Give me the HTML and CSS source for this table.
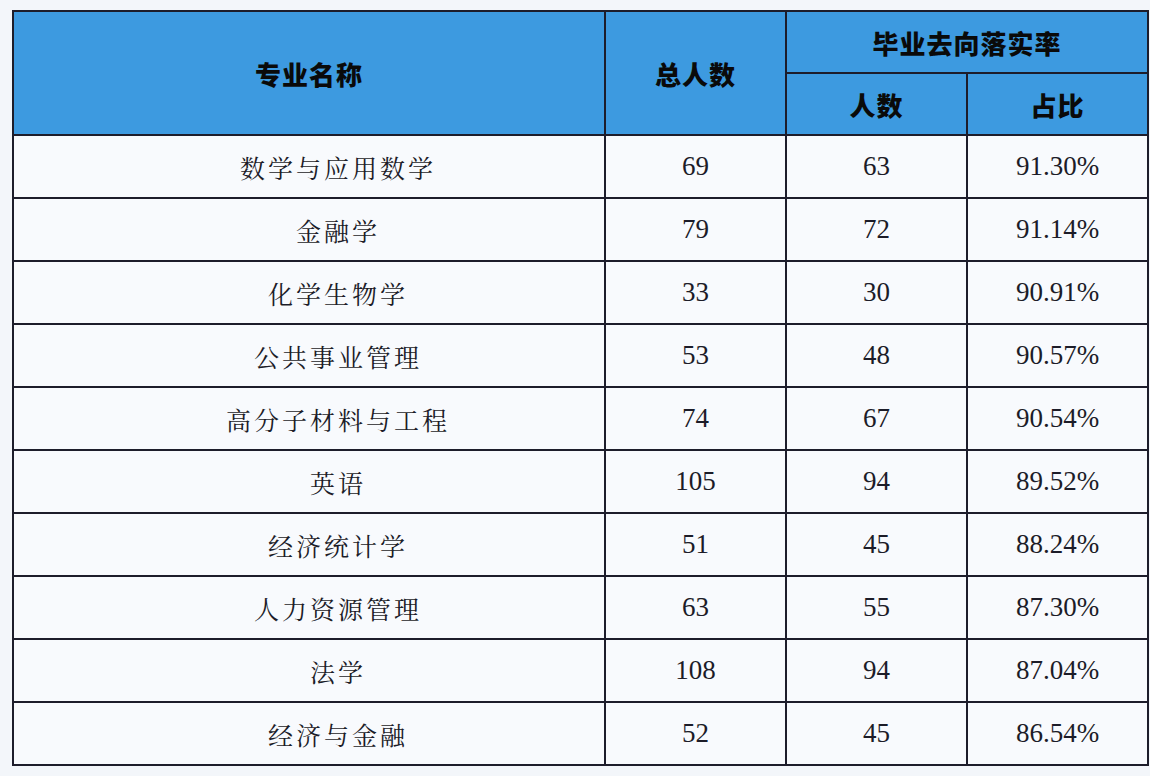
FILE: index.html
```html
<!DOCTYPE html>
<html lang="zh">
<head>
<meta charset="utf-8">
<link rel="stylesheet" href="styles.css">
</head>
<body>
<div class="wrap">
<table class="grid">
  <colgroup>
    <col class="c-name"><col class="c-num"><col class="c-num"><col class="c-num">
  </colgroup>
  <thead>
    <tr class="h1">
      <th rowspan="2">专业名称</th>
      <th rowspan="2">总人数</th>
      <th colspan="2">毕业去向落实率</th>
    </tr>
    <tr class="h2">
      <th>人数</th>
      <th>占比</th>
    </tr>
  </thead>
  <tbody>
    <tr><td class="zh">数学与应用数学</td><td>69</td><td>63</td><td>91.30%</td></tr>
    <tr><td class="zh">金融学</td><td>79</td><td>72</td><td>91.14%</td></tr>
    <tr><td class="zh">化学生物学</td><td>33</td><td>30</td><td>90.91%</td></tr>
    <tr><td class="zh">公共事业管理</td><td>53</td><td>48</td><td>90.57%</td></tr>
    <tr><td class="zh">高分子材料与工程</td><td>74</td><td>67</td><td>90.54%</td></tr>
    <tr><td class="zh">英语</td><td>105</td><td>94</td><td>89.52%</td></tr>
    <tr><td class="zh">经济统计学</td><td>51</td><td>45</td><td>88.24%</td></tr>
    <tr><td class="zh">人力资源管理</td><td>63</td><td>55</td><td>87.30%</td></tr>
    <tr><td class="zh">法学</td><td>108</td><td>94</td><td>87.04%</td></tr>
    <tr><td class="zh">经济与金融</td><td>52</td><td>45</td><td>86.54%</td></tr>
  </tbody>
</table>
</div>
</body>
</html>
```
FILE: styles.css
```css
html, body {
  margin: 0;
  padding: 0;
  background: #f3f6fa;
}
.wrap {
  padding: 10px 0 0 12px;
}
.grid {
  border-collapse: collapse;
  table-layout: fixed;
  width: 1135px;
  background: #f8fafd;
  color: #1c1c28;
}
.c-name { width: 592px; }
.c-num { width: 181px; }
.grid th, .grid td {
  border: 2px solid #1d1d2b;
  text-align: center;
  vertical-align: middle;
  padding: 0;
}
.grid th {
  background: #3d9ae0;
  color: #0a0a0a;
  font-family: "Noto Sans CJK SC", sans-serif;
  font-weight: 900;
  font-size: 26px;
  letter-spacing: 1px;
}
.h1 th { height: 60px; }
.h2 th { height: 60px; }
.grid td {
  height: 61px;
  font-family: "Liberation Serif", "Times New Roman", serif;
  font-size: 27px;
}
.grid td.zh {
  font-family: "Noto Serif CJK SC", "Noto Sans CJK SC", serif;
  font-weight: 400;
  font-size: 25px;
  letter-spacing: 3px;
  padding-left: 58px;
}
```
